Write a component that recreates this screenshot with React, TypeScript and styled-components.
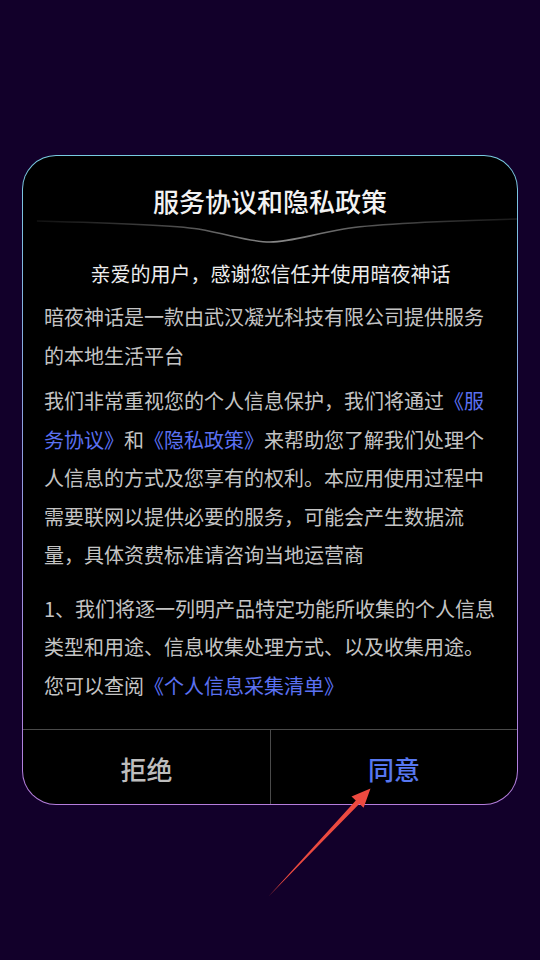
import React from 'react'
import styled, { createGlobalStyle } from 'styled-components'

const GlobalStyle = createGlobalStyle`
    html, body {
        margin: 0;
        padding: 0;
        background: #12002a;
    }
    body {
        font-family: "Noto Sans CJK SC", "Noto Sans", sans-serif;
    }
`

const Page = styled.div`
    position: relative;
    width: 540px;
    height: 960px;
    display: flex;
    align-items: center;
    justify-content: center;
    background: #12002a;
    overflow: hidden;
`

const Dialog = styled.div`
    width: 496px;
    height: 650px;
    box-sizing: border-box;
    border: 1.5px solid transparent;
    border-radius: 34px;
    background:
        linear-gradient(#000, #000) padding-box,
        linear-gradient(180deg, #78cbe0 0%, #8f9fe0 45%, #b57ddc 100%) border-box;
    display: flex;
    flex-direction: column;
    overflow: hidden;
`

const Title = styled.h1`
    margin: 0;
    padding-top: 29px;
    font-size: 26px;
    line-height: 32px;
    font-weight: 500;
    color: #f2f2f2;
    text-align: center;
`

const Divider = styled.svg`
    display: block;
    width: 100%;
    height: 30px;
`

const Body = styled.div`
    flex: 1;
    padding: 0 20px 0 21px;
`

const Greeting = styled.p`
    margin: 8px 0 0;
    font-size: 20px;
    line-height: 38px;
    color: #ececec;
    text-align: center;
`

const Paragraph = styled.p<{ $gap: number }>`
    margin: ${ props => props.$gap }px 0 0;
    font-size: 20px;
    line-height: 38.5px;
    color: #c4c4c4;
    word-break: break-all;
`

const DocLink = styled.a`
    color: #5b71f2;
    text-decoration: none;
`

const Footer = styled.div`
    display: grid;
    grid-template-columns: 1fr 1fr;
    height: 74px;
    border-top: 1px solid #4a4a4a;
`

const Action = styled.button<{ $primary?: boolean }>`
    border: none;
    background: transparent;
    font-family: inherit;
    font-size: 26px;
    font-weight: 500;
    padding: 3px 0 0;
    color: ${ props => props.$primary ? '#5777f0' : '#bdbdbd' };
    border-left: ${ props => props.$primary ? '1px solid #4a4a4a' : 'none' };
    cursor: pointer;
`

const Pointer = styled.svg`
    position: absolute;
    left: 0;
    top: 0;
    width: 540px;
    height: 960px;
    pointer-events: none;
`

export default function App() {
    return (
        <Page>
            <GlobalStyle />
            <Dialog>
                <Title>服务协议和隐私政策</Title>
                <Divider viewBox="0 0 496 30" preserveAspectRatio="none">
                    <defs>
                        <linearGradient id="curve" x1="0" x2="1" y1="0" y2="0">
                            <stop offset="0" stopColor="#555" stopOpacity="0.2" />
                            <stop offset="0.5" stopColor="#8a8a8a" />
                            <stop offset="1" stopColor="#555" stopOpacity="0.3" />
                        </linearGradient>
                    </defs>
                    <path d="M14 4 C90 6 150 8 176 12 C210 18 228 25 248 25 C268 25 288 18 322 12 C350 7 420 4 496 2"
                        fill="none" stroke="url(#curve)" strokeWidth="1.6" />
                </Divider>
                <Body>
                    <Greeting>亲爱的用户，感谢您信任并使用暗夜神话</Greeting>
                    <Paragraph $gap={5}>暗夜神话是一款由武汉凝光科技有限公司提供服务的本地生活平台</Paragraph>
                    <Paragraph $gap={7}>
                        我们非常重视您的个人信息保护，我们将通过<DocLink>《服务协议》</DocLink>和<DocLink>《隐私政策》</DocLink>来帮助您了解我们处理个人信息的方式及您享有的权利。本应用使用过程中需要联网以提供必要的服务，可能会产生数据流量，具体资费标准请咨询当地运营商
                    </Paragraph>
                    <Paragraph $gap={15}>
                        1、我们将逐一列明产品特定功能所收集的个人信息类型和用途、信息收集处理方式、以及收集用途。您可以查阅<DocLink>《个人信息采集清单》</DocLink>
                    </Paragraph>
                </Body>
                <Footer>
                    <Action>拒绝</Action>
                    <Action $primary>同意</Action>
                </Footer>
            </Dialog>
            <Pointer viewBox="0 0 540 960">
                <polygon
                    points="268,897 355.8,800.4 351.5,796.4 370.5,788.5 363.6,807.8 359.4,803.8"
                    fill="#ec4a40" />
            </Pointer>
        </Page>
    )
}
